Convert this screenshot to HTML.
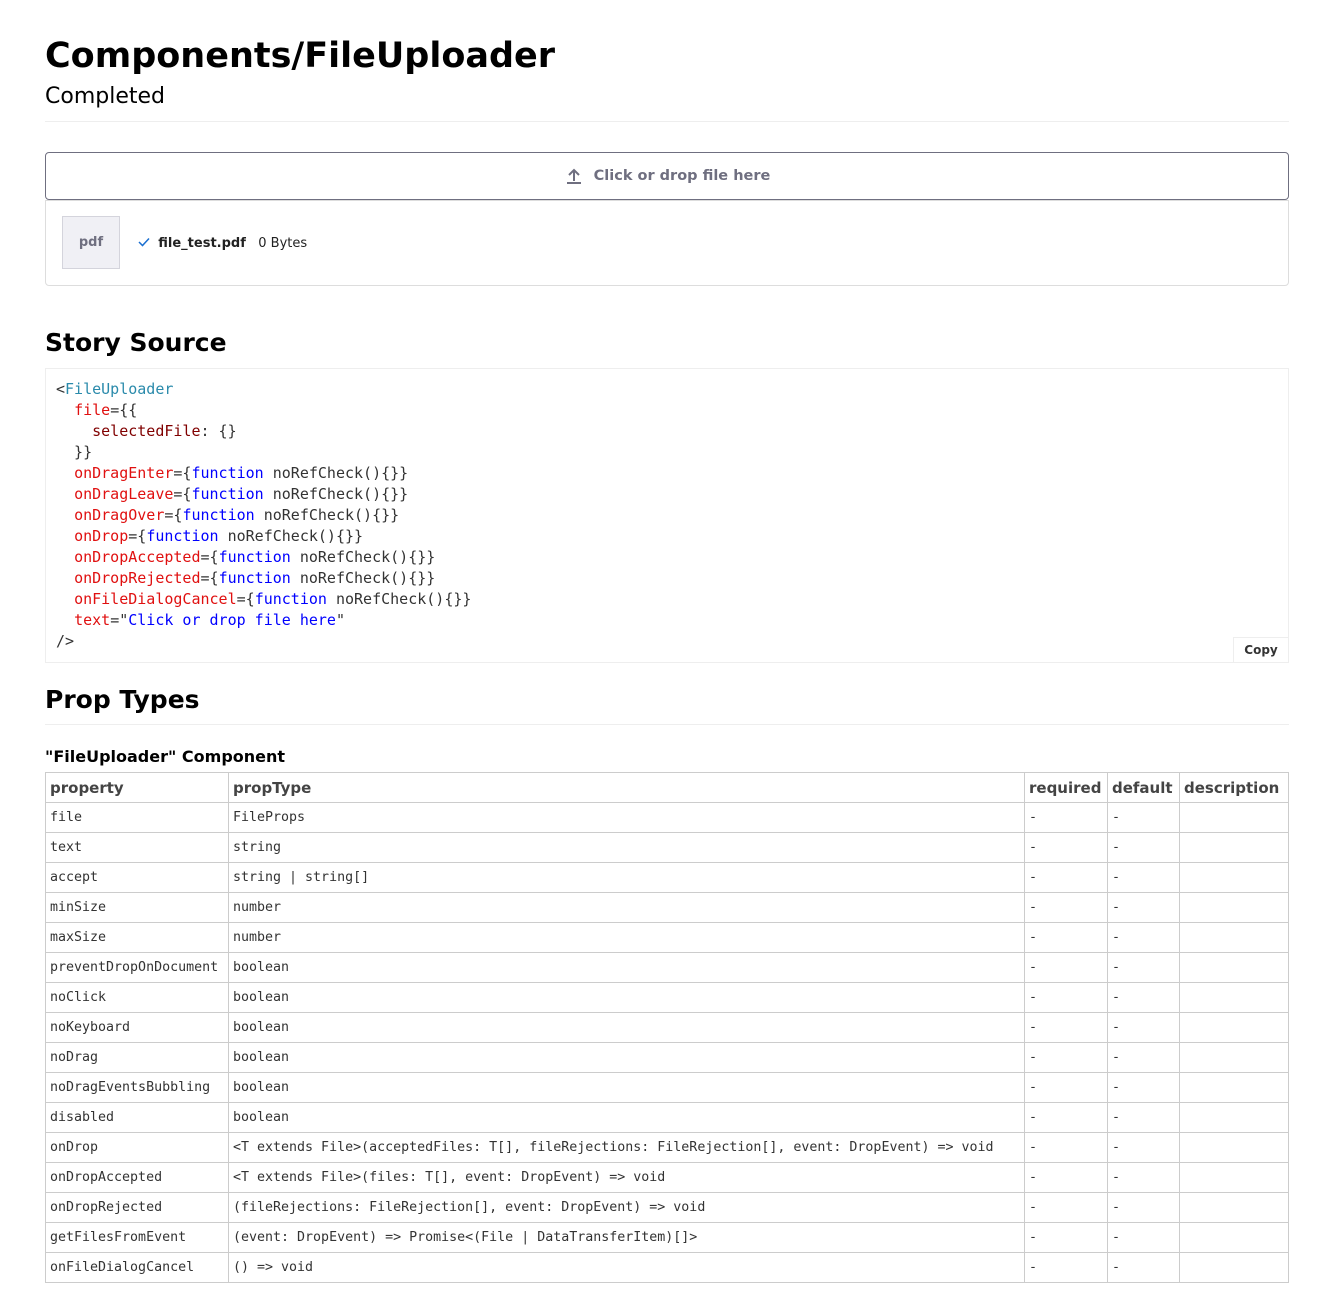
<!DOCTYPE html>
<html><head><meta charset="utf-8"><style>
body{margin:0;background:#fff;font-family:"DejaVu Sans","Liberation Sans",sans-serif;color:#000}
.wrap{position:absolute;left:45px;width:1244px;top:0}
h1{position:absolute;top:34px;left:0;margin:0;font-size:35px;font-weight:bold;line-height:44px}
.sub{position:absolute;top:83px;left:0;font-size:22px;line-height:28px}
.hr{position:absolute;left:0;width:1244px;height:1px;background:#eee}
.up{position:absolute;top:152px;left:0;width:1242px;height:46px;border:1px solid #6f6f80;border-radius:4px;display:flex;align-items:center;justify-content:center;color:#6f6f80;font-weight:bold;font-size:14.5px}
.list{position:absolute;top:200px;left:0;width:1242px;height:84px;border:1px solid #ddd;border-radius:0 0 4px 4px}
.thumb{position:absolute;left:16px;top:15px;width:56px;height:51px;background:#f0f0f5;border:1px solid #d4d4dc;color:#6f6f80;font-weight:bold;font-size:13px;display:flex;align-items:center;justify-content:center}
.fn{position:absolute;left:92px;top:35px;font-size:13px;color:#222}
h2{position:absolute;left:0;margin:0;font-size:25px;font-weight:bold;line-height:30px}
.code{position:absolute;top:368px;left:0;width:1242px;height:293px;border:1px solid #eee;font-family:"DejaVu Sans Mono",monospace;font-size:15px;line-height:21px;white-space:pre;color:#333}
.code div.in{position:absolute;left:10px;top:10px}
.t{color:#2a8aab}.a{color:#e01010}.k{color:#0000ff}.p{color:#800000}
.copy{position:absolute;right:0;bottom:0;width:54px;height:24px;border:1px solid #eee;border-bottom:0;border-right:0;font-family:"DejaVu Sans",sans-serif;font-size:12px;font-weight:bold;color:#333;display:flex;align-items:center;justify-content:center;background:#fff}
h4{position:absolute;top:747px;left:0;margin:0;font-size:16px;font-weight:bold}
table{position:absolute;top:772px;left:0;border-collapse:collapse;width:1244px}
td,th{border:1px solid #ccc;height:29px;padding:0 4px;text-align:left;font-family:"DejaVu Sans Mono",monospace;font-size:13.3px;color:#333;white-space:nowrap}
th{font-family:"DejaVu Sans",sans-serif;font-size:15px;font-weight:bold;color:#444}
</style></head><body><div class="wrap">
<h1>Components/FileUploader</h1>
<div class="sub">Completed</div>
<div class="hr" style="top:121px"></div>
<div class="up"><svg width="20" height="20" viewBox="0 0 20 20" style="margin-right:10px"><path d="M10 15V4M5 9l5-5 5 5M3 17h14" stroke="#6f6f80" stroke-width="2" fill="none"/></svg>Click or drop file here</div>
<div class="list"><div class="thumb">pdf</div><div class="fn"><svg width="12" height="10" viewBox="0 0 12 10"><path d="M1 5l3.5 3.5L11 1.5" stroke="#1a6fd0" stroke-width="1.5" fill="none"/></svg>&nbsp; <b>file_test.pdf</b>&nbsp;&nbsp; 0 Bytes</div></div>
<h2 style="top:328px">Story Source</h2>
<div class="code"><div class="in">&lt;<span class="t">FileUploader</span>
  <span class="a">file</span>={{
    <span class="p">selectedFile</span>: {}
  }}
  <span class="a">onDragEnter</span>={<span class="k">function</span> noRefCheck(){}}
  <span class="a">onDragLeave</span>={<span class="k">function</span> noRefCheck(){}}
  <span class="a">onDragOver</span>={<span class="k">function</span> noRefCheck(){}}
  <span class="a">onDrop</span>={<span class="k">function</span> noRefCheck(){}}
  <span class="a">onDropAccepted</span>={<span class="k">function</span> noRefCheck(){}}
  <span class="a">onDropRejected</span>={<span class="k">function</span> noRefCheck(){}}
  <span class="a">onFileDialogCancel</span>={<span class="k">function</span> noRefCheck(){}}
  <span class="a">text</span>="<span class="k">Click or drop file here</span>"
/&gt;</div><div class="copy">Copy</div></div>
<h2 style="top:685px">Prop Types</h2>
<div class="hr" style="top:724px"></div>
<h4>"FileUploader" Component</h4>
<table>
<tr><th style="width:174px">property</th><th style="width:787px">propType</th><th style="width:74px">required</th><th style="width:63px">default</th><th>description</th></tr>
<tr><td>file</td><td>FileProps</td><td>-</td><td>-</td><td></td></tr>
<tr><td>text</td><td>string</td><td>-</td><td>-</td><td></td></tr>
<tr><td>accept</td><td>string | string[]</td><td>-</td><td>-</td><td></td></tr>
<tr><td>minSize</td><td>number</td><td>-</td><td>-</td><td></td></tr>
<tr><td>maxSize</td><td>number</td><td>-</td><td>-</td><td></td></tr>
<tr><td>preventDropOnDocument</td><td>boolean</td><td>-</td><td>-</td><td></td></tr>
<tr><td>noClick</td><td>boolean</td><td>-</td><td>-</td><td></td></tr>
<tr><td>noKeyboard</td><td>boolean</td><td>-</td><td>-</td><td></td></tr>
<tr><td>noDrag</td><td>boolean</td><td>-</td><td>-</td><td></td></tr>
<tr><td>noDragEventsBubbling</td><td>boolean</td><td>-</td><td>-</td><td></td></tr>
<tr><td>disabled</td><td>boolean</td><td>-</td><td>-</td><td></td></tr>
<tr><td>onDrop</td><td>&lt;T extends File&gt;(acceptedFiles: T[], fileRejections: FileRejection[], event: DropEvent) =&gt; void</td><td>-</td><td>-</td><td></td></tr>
<tr><td>onDropAccepted</td><td>&lt;T extends File&gt;(files: T[], event: DropEvent) =&gt; void</td><td>-</td><td>-</td><td></td></tr>
<tr><td>onDropRejected</td><td>(fileRejections: FileRejection[], event: DropEvent) =&gt; void</td><td>-</td><td>-</td><td></td></tr>
<tr><td>getFilesFromEvent</td><td>(event: DropEvent) =&gt; Promise&lt;(File | DataTransferItem)[]&gt;</td><td>-</td><td>-</td><td></td></tr>
<tr><td>onFileDialogCancel</td><td>() =&gt; void</td><td>-</td><td>-</td><td></td></tr>
</table>
</div></body></html>
